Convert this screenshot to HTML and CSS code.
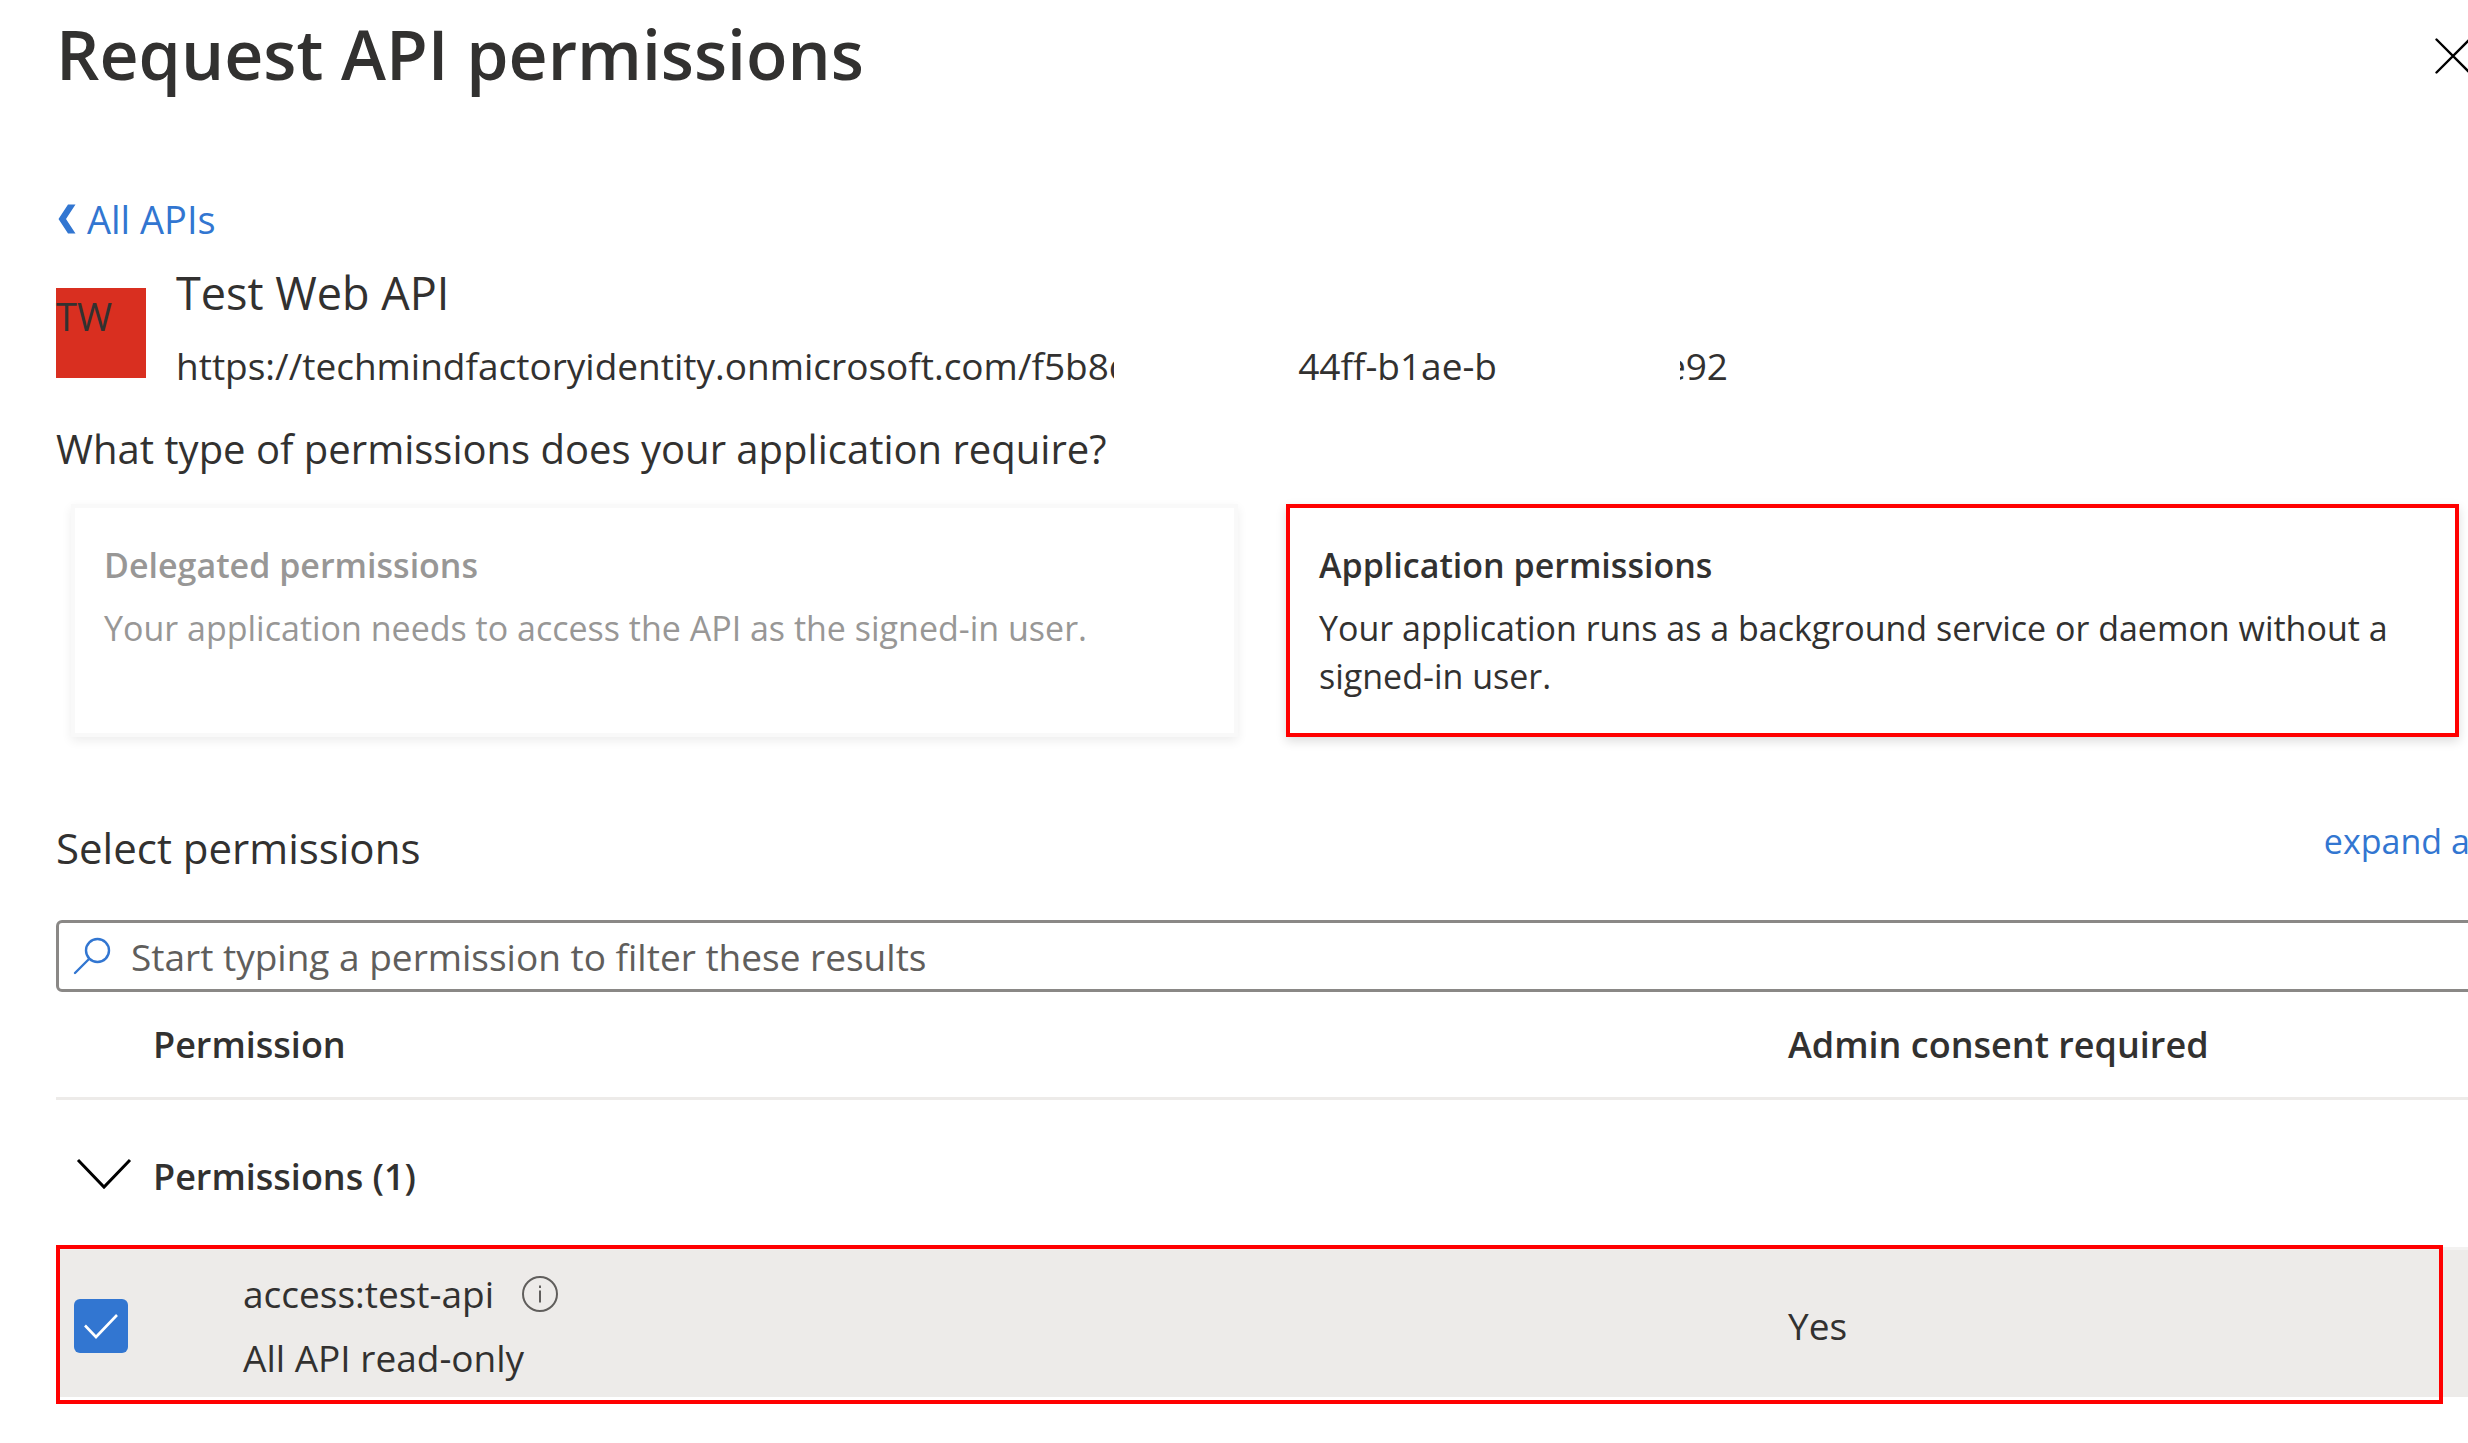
FILE: index.html
```html
<!DOCTYPE html>
<html lang="en">
<head>
  <meta charset="utf-8">
  <title>Request API permissions</title>
  <link rel="stylesheet" href="styles.css">
</head>
<body>
  <main class="panel">
    <header class="panel-header">
      <h1 class="panel-title">Request API permissions</h1>
      <button class="icon-button close-button" type="button" aria-label="Close">
        <svg width="36" height="36" viewBox="0 0 36 36" fill="none" stroke="#000" stroke-width="2.4" stroke-linecap="round"><path d="M1.5 1.5l33 33M34.500 1.500l-33 33"/></svg>
      </button>
    </header>

    <a class="back-link" href="#apis">
      <svg width="20" height="30" viewBox="0 0 20 30" fill="currentColor"><path d="M12 0.500H19.500L10 15l9.500 14.500H12L2.500 15z"/></svg>
      All APIs
    </a>

    <section class="api">
      <div class="api-icon">TW</div>
      <div class="api-details">
        <h2 class="api-name">Test Web API</h2>
        <p class="api-uri">
          <span class="uri-part uri-host">https://techmindfactoryidentity.onmicrosoft.com/f5b8c</span>
          <span class="uri-part uri-middle">44ff-b1ae-b</span>
          <span class="uri-part uri-end">e92</span>
        </p>
      </div>
    </section>

    <p class="question">What type of permissions does your application require?</p>
    <div class="choices">
      <button class="choice choice-muted" type="button">
        <span class="choice-title">Delegated permissions</span>
        <span class="choice-text">Your application needs to access the API as the signed-in user.</span>
      </button>
      <button class="choice choice-marked" type="button">
        <span class="choice-title">Application permissions</span>
        <span class="choice-text">Your application runs as a background service or daemon without a signed-in user.</span>
      </button>
    </div>

    <div class="select-header">
      <h2 class="select-title">Select permissions</h2>
      <a class="expand-link" href="#expand">expand all</a>
    </div>

    <label class="search">
      <svg width="38" height="38" viewBox="0 0 38 38" fill="none" stroke="#3276d1" stroke-width="2.4" stroke-linecap="round"><circle cx="24.500" cy="13.500" r="11.500"/><path d="M16 22L2 36"/></svg>
      <input class="search-input" type="text" aria-label="Filter permissions" placeholder="Start typing a permission to filter these results">
    </label>

    <table class="permissions">
      <colgroup><col class="col-select"><col><col class="col-consent"></colgroup>
      <thead>
        <tr><td></td><th scope="col">Permission</th><th scope="col">Admin consent required</th></tr>
      </thead>
      <tbody>
        <tr class="group-row">
          <td>
            <button class="icon-button group-toggle" type="button" aria-label="Collapse permissions">
              <svg width="56" height="32" viewBox="0 0 56 32" fill="none" stroke="#000" stroke-width="3"><path d="M2 2l26 27L54 2"/></svg>
            </button>
          </td>
          <th scope="rowgroup" colspan="2">Permissions (1)</th>
        </tr>
        <tr class="permission-row">
          <td class="check-cell">
            <span class="check">
              <input class="check-input" id="access" type="checkbox" checked>
              <svg width="54" height="54" viewBox="0 0 54 54" fill="none" stroke="#fff" stroke-width="2.600"><path d="M11 26.500L22 38L43 16"/></svg>
            </span>
          </td>
          <td class="permission-cell">
            <div class="permission-name">
              <label for="access">access:test-api</label>
              <svg width="36" height="36" viewBox="0 0 36 36" fill="none" stroke="#605e5c" stroke-width="2"><circle cx="18" cy="18" r="17"/><path d="M18 14.500V26.500M18 9.500v2.500"/></svg>
            </div>
            <div>All API read-only</div>
          </td>
          <td>Yes</td>
        </tr>
      </tbody>
    </table>
  </main>
</body>
</html>
```
FILE: styles.css
```css
* {
  box-sizing: border-box;
}

body {
  margin: 0;
  overflow-x: hidden;
  background: #fff;
  color: #323130;
  font-family: "Open Sans", "Noto Sans", sans-serif;
  font-size: 37px;
}

h1,
h2,
p {
  margin: 0;
  font-weight: 400;
}

svg {
  display: block;
  flex: none;
}

a {
  color: #3276d1;
  text-decoration: none;
}

button,
input {
  font: inherit;
  color: inherit;
}

.panel {
  padding: 0 0 40px 56px;
  overflow: hidden;
}

.icon-button {
  display: block;
  padding: 0;
  border: 0;
  background: none;
}

.panel-header {
  display: flex;
  align-items: center;
  justify-content: space-between;
  height: 108px;
}

.panel-title {
  font-size: 68px;
  font-weight: 600;
  line-height: 108px;
}

.close-button {
  margin: 4px -3px 0 0;
}

.back-link {
  display: flex;
  align-items: center;
  gap: 11px;
  width: fit-content;
  margin-top: 87px;
  font-size: 38px;
  line-height: 48px;
}

/* API summary */
.api {
  display: flex;
  gap: 30px;
  margin-top: 20px;
}

.api-icon {
  width: 90px;
  height: 90px;
  margin-top: 25px;
  background: #d92f20;
  font-size: 38px;
  line-height: 56px;
}

.api-name {
  font-size: 45px;
  line-height: 60px;
}

.api-uri {
  display: flex;
  gap: 183px;
  margin-top: 18px;
  line-height: 50px;
}

.uri-part {
  display: flex;
  overflow: hidden;
  white-space: nowrap;
}

.uri-host {
  width: 938px;
}

.uri-middle {
  justify-content: flex-end;
  width: 200px;
}

.uri-end {
  justify-content: flex-end;
  width: 48px;
}

/* Permission type */
.question {
  margin-top: 30px;
  font-size: 40px;
  line-height: 56px;
}

.choices {
  display: grid;
  grid-template-columns: 1fr 1fr;
  gap: 48px;
  margin-top: 27px;
  padding: 0 9px 0 15px;
}

.choice {
  display: flex;
  flex-direction: column;
  gap: 15px;
  padding: 33px 29px;
  border: 4px solid #f9f9f9;
  background: #fff;
  box-shadow: 0 4px 10px rgba(0, 0, 0, 0.14);
  font-size: 34px;
  line-height: 48px;
  text-align: left;
}

.choice-title {
  font-weight: 600;
}

.choice-muted {
  margin-right: 3px;
  color: #989796;
  box-shadow: 0 4px 10px rgba(0, 0, 0, 0.07);
}

.choice-marked {
  margin-left: -3px;
  border-color: #f00;
}

/* Permission list */
.select-header {
  display: flex;
  align-items: flex-start;
  justify-content: space-between;
  margin-top: 81px;
}

.select-title {
  font-size: 42px;
  line-height: 60px;
}

.expand-link {
  margin-right: -19px;
  font-size: 34px;
  line-height: 46px;
}

.search {
  display: flex;
  align-items: center;
  gap: 20px;
  height: 72px;
  margin: 42px -8px 0 0;
  padding-left: 14px;
  border: 3px solid #8a8886;
  border-radius: 6px;
}

.search-input {
  flex: 1;
  min-width: 0;
  padding: 0;
  border: 0;
  outline: 0;
  background: none;
}

.search-input::placeholder {
  color: #605e5c;
  opacity: 1;
}

.permissions {
  width: 100%;
  border-spacing: 0;
  table-layout: fixed;
  text-align: left;
}

.permissions td,
.permissions th {
  padding: 0;
}

.permissions th {
  font-size: 36px;
  font-weight: 600;
}

.permissions thead td,
.permissions thead th {
  height: 108px;
  border-bottom: 3px solid #edebe9;
}

.col-select {
  width: 97px;
}

.col-consent {
  width: 680px;
}

.group-row {
  height: 147px;
}

.permissions .group-row th {
  padding-top: 5px;
}

.group-toggle {
  margin-left: 20px;
}

.permission-row {
  position: relative;
}

.permissions .permission-row td {
  padding: 12px 0 7px;
  border-top: 3px solid #f3f2f1;
  background: #edebe9;
  line-height: 64px;
}

/* Highlight frame over the whole row */
.check-cell::after {
  content: "";
  position: absolute;
  inset: -2px 25px -7px 0;
  border: 4px solid #f00;
  pointer-events: none;
}

.permissions .permission-row .permission-cell {
  padding-left: 90px;
}

.permission-name {
  display: flex;
  align-items: center;
  gap: 28px;
}

.check {
  display: grid;
  width: 54px;
  margin-left: 18px;
}

.check > * {
  grid-area: 1 / 1;
  pointer-events: none;
}

.check > .check-input {
  appearance: none;
  width: 54px;
  height: 54px;
  margin: 0;
  border-radius: 6px;
  background: #3276d1;
  pointer-events: auto;
}
```
